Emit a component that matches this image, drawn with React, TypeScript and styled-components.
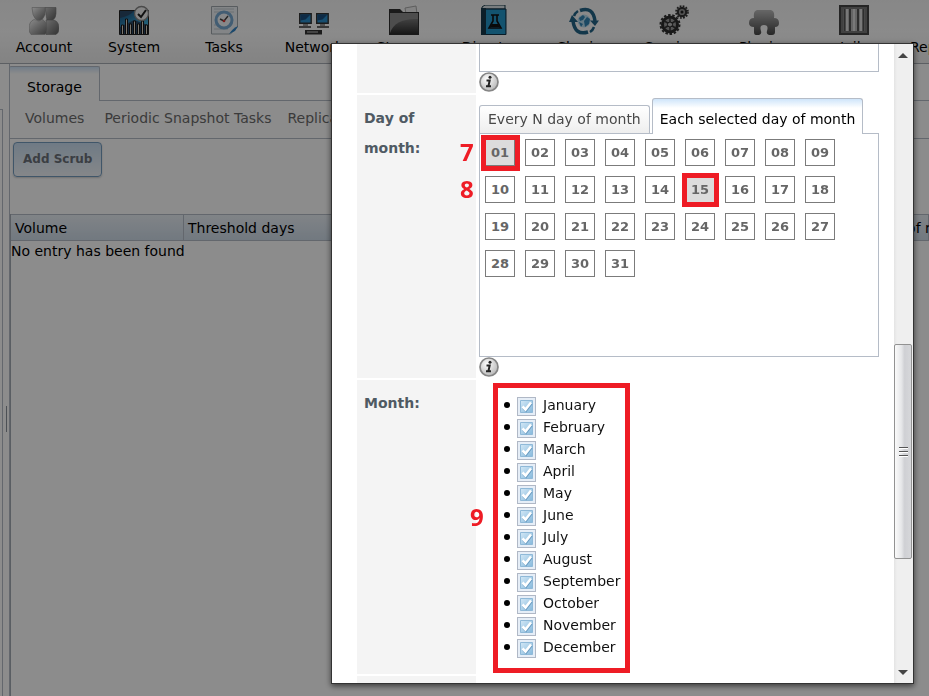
import React from "react";
import styled, { createGlobalStyle, css } from "styled-components";

const GlobalStyle = createGlobalStyle`
  *, *::before, *::after { box-sizing: border-box; }
  html, body, #root { height: 100%; }
  body {
    margin: 0;
    overflow: hidden;
    background: #fff;
    color: #000;
    font: 14px/20px "DejaVu Sans", Verdana, sans-serif;
  }
  button { font: inherit; padding: 0; }
  ul { margin: 0; padding: 0; list-style: none; }
`;

const Page = styled.div`
  height: 100vh;
  overflow: hidden;
  display: flex;
  flex-direction: column;
`;

const Toolbar = styled.nav`
  flex: none;
  height: 64px;
  margin-left: -1px;
  display: flex;
  background: linear-gradient(#f6f6f6, #fdfdfd 50%, #efefef);
  border-bottom: 1px solid #a8adb5;
`;

const ToolItem = styled.button`
  flex: 0 0 90px;
  border: 0;
  background: none;
  padding-top: 5px;
  display: flex;
  flex-direction: column;
  align-items: center;
  gap: 2px;
  svg { display: block; flex: none; }
`;

const Workspace = styled.div`
  flex: 1;
  display: flex;
  min-height: 0;
`;

const SidePane = styled.aside`
  flex: 0 0 3px;
  margin-top: 45px;
  border: 1px solid #b5bcc7;
  border-width: 1px 1px 0 0;
`;

const Splitter = styled.div`
  flex: 0 0 6px;
  display: flex;
  align-items: center;
  justify-content: center;
  padding-top: 78px;
  &::before {
    content: "";
    width: 1px;
    height: 26px;
    background: #8a929c;
  }
`;

const Main = styled.main`
  flex: 1;
  min-width: 0;
  display: flex;
  flex-direction: column;
  border-left: 1px solid #b5bcc7;
  padding-top: 2px;
`;

const MainTabs = styled.div`
  display: flex;
  margin-left: -1px;
  &::after {
    content: "";
    flex: 1;
    border-bottom: 1px solid #b5bcc7;
  }
`;

const MainTab = styled.button`
  height: 35px;
  padding: 5px 17px 0;
  border: 1px solid #b5bcc7;
  border-bottom: 0;
  border-radius: 2px 2px 0 0;
  background: linear-gradient(#cfe3f7, #fff 7px);
`;

const SubTabs = styled.div`
  display: flex;
  gap: 16px;
  height: 38px;
  padding: 0 15px 4px;
  white-space: nowrap;
  border-bottom: 1px solid #b5bcc7;
`;

const SubTab = styled.button`
  border: 0;
  background: none;
  color: #6c6c6c;
  margin-right: 4px;
  & + & { margin-right: 0; }
`;

const Actions = styled.div`
  padding: 3px;
  height: 75px;
`;

const AddButton = styled.button`
  height: 35px;
  padding: 0 9px 2px;
  border: 1px solid #759dc0;
  border-radius: 4px;
  background: linear-gradient(#cbdff2, #f2f6fa);
  box-shadow: 0 1px 2px rgba(0, 0, 0, 0.2);
  color: #6c727a;
  font-weight: bold;
  font-size: 12px;
`;

const Grid = styled.table`
  flex: 1;
  display: flex;
  flex-direction: column;
  width: 100%;
  border-left: 1px solid #a4abb5;
  thead, tbody { display: block; }
  tr { display: flex; }
  th {
    height: 27px;
    padding: 3px 4px;
    text-align: left;
    font-weight: normal;
    white-space: nowrap;
    background: linear-gradient(#eaf0f6, #cfdce9);
    border: 1px solid #b5bcc7;
    border-width: 1px 1px 1px 0;
  }
  td { padding: 0; }
`;

const Head = styled.th<{ $w?: number }>`
  flex: ${(p) => (p.$w ? `0 0 ${p.$w}px` : "1 1 0")};
  min-width: 0;
`;

const Backdrop = styled.div`
  position: fixed;
  inset: 0;
  background: rgba(0, 0, 0, 0.45);
`;

const Dialog = styled.section`
  position: fixed;
  inset: 43px 15px 12px 331px;
  display: flex;
  border: 1px solid #333;
  background: #fff;
  box-shadow: 0 2px 6px rgba(0, 0, 0, 0.6);
`;

const FormArea = styled.div`
  flex: 1;
  min-width: 0;
  overflow: hidden;
  padding: 0 15px 0 25px;
`;

const Row = styled.div`
  display: grid;
  grid-template-columns: 119px minmax(0, 1fr);
  column-gap: 3px;
  margin-bottom: 2px;
`;

const RowLabel = styled.div`
  padding: 8px 30px 0 7px;
  min-height: 20px;
  background: #f4f4f4;
  color: #4f5a63;
  font-weight: bold;
  line-height: 30px;
`;

const Field = styled.div<{ $top?: number }>`
  padding-top: ${(p) => p.$top ?? 0}px;
  padding-bottom: 1px;
`;

const PaneEnd = styled.div`
  height: 28px;
  border: 1px solid #b5bcc7;
  border-top: 0;
`;

const InfoButton = styled.button`
  display: block;
  width: 20px;
  height: 20px;
  border: 0;
  background: none;
  svg { display: block; }
`;

const Tabs = styled.div`
  display: flex;
  align-items: flex-end;
  gap: 2px;
  margin-bottom: -1px;
`;

const Tab = styled.button<{ $active?: boolean }>`
  height: 28px;
  margin-bottom: 1px;
  padding: 0 8px 2px;
  white-space: nowrap;
  border: 1px solid #b5bcc7;
  border-bottom: 0;
  border-radius: 3px 3px 0 0;
  color: #494949;
  background: linear-gradient(#fff, #eee);
  ${(p) =>
    p.$active &&
    css`
      position: relative;
      height: 36px;
      margin-bottom: 0;
      padding: 4px 7px 0;
      color: #000;
      background: linear-gradient(#cfe5fa, #fff 9px);
    `}
`;

const Pane = styled.div`
  min-height: 224px;
  padding: 5px;
  border: 1px solid #b5bcc7;
`;

const Days = styled.ul`
  display: grid;
  grid-template-columns: repeat(9, 30px);
  gap: 10px;
`;

const DayItem = styled.li`
  position: relative;
  height: 27px;
`;

const Day = styled.button`
  width: 100%;
  height: 100%;
  border: 1px solid #7b7b7b;
  background: #fff;
  color: #666;
  font-weight: bold;
  font-size: 13px;
  &[aria-pressed="true"] { background: #dcdcdc; }
`;

const Highlight = styled.span<{ $spread: number }>`
  position: absolute;
  inset: ${(p) => `-${p.$spread - 1}px -${p.$spread}px -${p.$spread}px -${p.$spread - 1}px`};
  border: 5px solid #ee1c25;
  pointer-events: none;
`;

const Step = styled.span`
  position: absolute;
  left: -25px;
  top: -1px;
  color: #ee1c25;
  font: bold 24px/28px "Open Sans", "Noto Sans", sans-serif;
`;

const MonthBox = styled.div`
  position: relative;
  width: 137px;
  margin-left: 14px;
  padding: 6px 0 10px 6px;
  border: 5px solid #ee1c25;
  ${Step} { left: -28px; top: 115px; }
`;

const Month = styled.label`
  display: flex;
  align-items: center;
  height: 22px;
  color: #111;
  &::before {
    content: "";
    width: 6px;
    height: 6px;
    margin-right: 7px;
    border-radius: 50%;
    background: #000;
  }
`;

const Check = styled.span`
  position: relative;
  width: 19px;
  height: 19px;
  margin: 2px 7px 0 0;
  input {
    appearance: none;
    display: block;
    width: 19px;
    height: 19px;
    margin: 0;
    border: 1px solid #b0b8c6;
    background: #e6eef7;
  }
  svg {
    position: absolute;
    inset: 0;
    pointer-events: none;
    visibility: hidden;
  }
  input:checked + svg { visibility: visible; }
`;

const ScrollBar = styled.div`
  flex: 0 0 19px;
  display: flex;
  flex-direction: column;
  padding-right: 1px;
  background: linear-gradient(90deg, #e4e4e4, #efefef 3px);
`;

const Arrow = styled.button`
  flex: 0 0 22px;
  display: flex;
  align-items: center;
  justify-content: center;
  border: 0;
  background: none;
`;

const Track = styled.div<{ $share: number }>`
  flex: ${(p) => p.$share} 0 0;
`;

const Thumb = styled.div`
  flex: 214 0 0;
  display: flex;
  flex-direction: column;
  align-items: center;
  justify-content: center;
  gap: 3px;
  border: 1px solid #929292;
  border-radius: 2px;
  background: linear-gradient(90deg, #fafafa, #e6e7e9 40%, #cfd0d4 60%, #d6d7da);
`;

const Grip = styled.span`
  width: 9px;
  height: 1px;
  background: #555;
  box-shadow: 0 1px #fff;
`;

function Gradients() {
  return (
    <svg width="0" height="0" display="block" aria-hidden="true">
      <defs>
        <linearGradient id="silver" x1="0" y1="0" x2="1" y2="1">
          <stop offset="0" stopColor="#fff" />
          <stop offset="1" stopColor="#686868" />
        </linearGradient>
        <linearGradient id="silverDark" x1="0" y1="0" x2="1" y2="1">
          <stop offset="0" stopColor="#c4c4c4" />
          <stop offset="1" stopColor="#5c5c5c" />
        </linearGradient>
        <linearGradient id="dark" x1="0" y1="0" x2="0" y2="1">
          <stop offset="0" stopColor="#777" />
          <stop offset="1" stopColor="#2c2c2c" />
        </linearGradient>
        <linearGradient id="plug" x1="0" y1="0" x2="0" y2="1">
          <stop offset="0" stopColor="#bbb" />
          <stop offset="1" stopColor="#484848" />
        </linearGradient>
        <linearGradient id="blue" x1="0" y1="0" x2="1" y2="1">
          <stop offset="0" stopColor="#174a78" />
          <stop offset="1" stopColor="#43bde9" />
        </linearGradient>
        <linearGradient id="check" x1="0" y1="0" x2="1" y2="1">
          <stop offset="0" stopColor="#d3e8f6" />
          <stop offset="1" stopColor="#86b9dc" />
        </linearGradient>
        <radialGradient id="info" cx="0.4" cy="0.35" r="0.7">
          <stop offset="0" stopColor="#fff" />
          <stop offset="1" stopColor="#b4b4b4" />
        </radialGradient>
      </defs>
    </svg>
  );
}

const Icon = ({ children }: { children: React.ReactNode }) => (
  <svg width="30" height="30" viewBox="0 0 30 30" aria-hidden="true">
    {children}
  </svg>
);

const AccountIcon = () => (
  <Icon>
    <g strokeWidth="0.6">
      <path d="M16 2.500h11v6q0 5-4 7h-5z" fill="url(#silverDark)" stroke="#777" />
      <path d="M17 15h8q5 2 5 8 0 5-3 6.500H17z" fill="url(#silverDark)" stroke="#777" />
      <path d="M3 2.500h13v7q-2 6-6 6t-6-6z" fill="url(#silver)" stroke="#999" />
      <path d="M5 14.500q5 3 9 0 4 3 4 9 0 5-2 6H2q-2-2-2-6 0-7 5-9z" fill="url(#silver)" stroke="#999" />
    </g>
  </Icon>
);

const SystemIcon = () => (
  <Icon>
    <path d="M.5 5.500h29v24H.5z" fill="#2a4a68" stroke="#222" />
    <path d="M1 13q10-2 14-7h14v14L15 15 1 22z" fill="url(#blue)" />
    <path d="M2.500 29V20h2v9m2 0V14h2v15m2 0V19h2v10m2 0V16h2v13m2 0V19h2v10m2 0V16h2v13m2 0V20h2v9" fill="#ddd8cd" stroke="#161616" />
    <circle cx="22.500" cy="8.500" r="7" fill="#f2f2f2" stroke="#888" strokeWidth="1.400" />
    <path d="M19 9l3 3 5-7" fill="none" stroke="#222" strokeWidth="2" />
  </Icon>
);

const TasksIcon = () => (
  <Icon>
    <path d="M2.500 1.500h26V22l-7 7h-19z" fill="#eef3f6" stroke="#a0a8ae" />
    <path d="M5 4h20M5 7h20M5 20h18M5 24h14" stroke="#c4ccd2" />
    <circle cx="15" cy="15" r="8" fill="#f4f8fb" stroke="#78a9d2" strokeWidth="3" />
    <path d="M15 16l4-5M15 16l-4-2" stroke="#444" strokeWidth="1.400" />
    <circle cx="15" cy="16" r="1.300" fill="#d33" />
    <path d="M20 29q4-6 9-8l-3 5z" fill="#3084c6" />
  </Icon>
);

const NetworkIcon = () => (
  <Icon>
    <path d="M.7 8.700h11.500v9.500H.7zM17.700 8.700h11.500v9.500H17.700z" fill="#2b8fcc" stroke="#333" strokeWidth="1.400" />
    <path d="M1.500 9.500h10l-5 5-5 1zM18.500 9.500h10l-5 5-5 1z" fill="#1b4f80" />
    <path d="M4 19h5v2H4zM21 19h5v2h-5z" fill="#999" />
    <path d="M0 21h12v2H0zM18 21h12v2H18z" fill="#666" />
    <path d="M6 25h17v4.500H6z" fill="#333" />
    <path d="M8 27h11" stroke="#ccc" />
  </Icon>
);

const StorageIcon = () => (
  <Icon>
    <path d="M16 3l11-2 1 8H17z" fill="#eee" stroke="#aaa" />
    <path d="M0 4h11l3 3h16v23H0z" fill="#303030" />
    <path d="M1 8h28v21H1z" fill="#8c8c8c" />
    <path d="M1 28Q6 13 29 14v15H1z" fill="url(#dark)" />
  </Icon>
);

const DirectoryIcon = () => (
  <Icon>
    <path d="M3 2l3-2h20v4H3z" fill="#dce4e8" stroke="#173846" />
    <path d="M3 4h24v25.500H3z" fill="#1d7fae" stroke="#123348" />
    <path d="M7 5h19v24H7z" fill="#2497cb" />
    <path d="M2 3h5v27H2z" fill="#17394c" />
    <path d="M12 10h8M14 10v6l-4 7h12l-4-7v-6" fill="none" stroke="#111" strokeWidth="1.600" />
    <path d="M13 19h6l2 3H11z" fill="#111" />
  </Icon>
);

const SharingIcon = () => (
  <Icon>
    <circle cx="15" cy="16" r="6.500" fill="#b9def0" />
    <path d="M10 13l4-3 2 2-2 3-3 1zM15 16l3-4 3 2-1 5-4 3zM10 17l4 2-2 3z" fill="#3485b5" />
    <path d="M11 5.500Q24 1 26 16" fill="none" stroke="#246487" strokeWidth="3.500" />
    <path d="M21 15.500h9L26 21z" fill="#246487" />
    <path d="M19 27Q6 31 4 16" fill="none" stroke="#246487" strokeWidth="3.500" />
    <path d="M0 17h9L3 10z" fill="#246487" />
    <path d="M5 11q1-3 4-5M25 22q-1 3-4 5" fill="none" stroke="#246487" strokeWidth="2.500" />
  </Icon>
);

const ServicesIcon = () => (
  <Icon>
    <circle cx="11" cy="19.500" r="9.500" fill="none" stroke="#333" strokeWidth="2" strokeDasharray="2.500 1.750" />
    <circle cx="11" cy="19.500" r="7.500" fill="#999" stroke="#2c2c2c" strokeWidth="3" />
    <path d="M11 13v13M5.500 16l11 7M16.500 16l-11 7" stroke="#333" strokeWidth="1.500" />
    <circle cx="11" cy="19.500" r="2.500" fill="#bbb" stroke="#222" />
    <circle cx="23" cy="7" r="6" fill="none" stroke="#333" strokeWidth="1.600" strokeDasharray="1.800 1.340" />
    <circle cx="23" cy="7" r="4.200" fill="#999" stroke="#333" strokeWidth="2.200" />
    <circle cx="23" cy="7" r="1.500" fill="#222" />
  </Icon>
);

const PluginsIcon = () => (
  <Icon>
    <path d="M8 5h14q4 1 3 8 5 0 5 5 0 4-4 4v5q0 3-3 3h-3q-3-1-2-4 2-6-3-6t-3 6q1 3-2 4H7q-2 0-2-3v-5q-5 0-5-4 0-5 5-5-1-7 3-8z" fill="url(#plug)" />
  </Icon>
);

const JailsIcon = () => (
  <Icon>
    <path d="M1 1h28v28H1z" fill="#b8b8b8" stroke="#444" strokeWidth="2" />
    <path d="M3 3h24v24H3z" fill="none" stroke="#777" strokeWidth="2" />
    <path d="M5.500 4v22M11 4v22M19 4v22M24.500 4v22" stroke="#555" strokeWidth="2" />
    <path d="M8 4v22M15 4v22M22 4v22" stroke="#dcdcdc" strokeWidth="2" />
  </Icon>
);

const tools: [string, React.ComponentType][] = [
  ["Account", AccountIcon],
  ["System", SystemIcon],
  ["Tasks", TasksIcon],
  ["Network", NetworkIcon],
  ["Storage", StorageIcon],
  ["Directory", DirectoryIcon],
  ["Sharing", SharingIcon],
  ["Services", ServicesIcon],
  ["Plugins", PluginsIcon],
  ["Jails", JailsIcon],
  ["Reporting", SystemIcon],
];

const months = [
  "January", "February", "March", "April", "May", "June",
  "July", "August", "September", "October", "November", "December",
];

const days = Array.from({ length: 31 }, (_, i) => String(i + 1).padStart(2, "0"));
const highlights: Record<string, number> = { "01": 5, "15": 4 };
const steps: Record<string, string> = { "01": "7", "10": "8" };

const Info = () => (
  <InfoButton aria-label="Help">
    <svg width="20" height="20" viewBox="0 0 20 20">
      <circle cx="10" cy="10" r="9" fill="url(#info)" stroke="#858585" strokeWidth="1.700" />
      <circle cx="11" cy="5.200" r="1.500" fill="#222" />
      <path d="M7.500 8.500h3.200L9.400 14.300h2.600M7 14.300h2.400" fill="none" stroke="#222" strokeWidth="2" />
    </svg>
  </InfoButton>
);

export default function App() {
  const [selected, setSelected] = React.useState(["01", "15"]);
  const toggle = (d: string) =>
    setSelected((s) => (s.includes(d) ? s.filter((x) => x !== d) : [...s, d]));

  return (
    <>
      <GlobalStyle />
      <Page>
        <Toolbar>
          {tools.map(([name, Glyph]) => (
            <ToolItem key={name}>
              <Glyph />
              {name}
            </ToolItem>
          ))}
        </Toolbar>
        <Workspace>
          <SidePane />
          <Splitter />
          <Main>
            <MainTabs>
              <MainTab>Storage</MainTab>
            </MainTabs>
            <SubTabs>
              <SubTab>Volumes</SubTab>
              <SubTab>Periodic Snapshot Tasks</SubTab>
              <SubTab>Replication Tasks</SubTab>
            </SubTabs>
            <Actions>
              <AddButton>Add Scrub</AddButton>
            </Actions>
            <Grid>
              <thead>
                <tr>
                  <Head $w={173}>Volume</Head>
                  <Head $w={174}>Threshold days</Head>
                  <Head>Description</Head>
                  <Head $w={58}>Day of month</Head>
                </tr>
              </thead>
              <tbody>
                <tr>
                  <td colSpan={4}>No entry has been found</td>
                </tr>
              </tbody>
            </Grid>
          </Main>
        </Workspace>
      </Page>
      <Backdrop />
      <Dialog role="dialog" aria-label="Add Scrub">
        <FormArea>
          <Gradients />
          <Row>
            <RowLabel />
            <Field>
              <PaneEnd />
              <Info />
            </Field>
          </Row>
          <Row>
            <RowLabel>Day of month:</RowLabel>
            <Field $top={3}>
              <Tabs role="tablist">
                <Tab role="tab">Every N day of month</Tab>
                <Tab role="tab" aria-selected $active>
                  Each selected day of month
                </Tab>
              </Tabs>
              <Pane>
                <Days>
                  {days.map((d) => (
                    <DayItem key={d}>
                      <Day aria-pressed={selected.includes(d)} onClick={() => toggle(d)}>
                        {d}
                      </Day>
                      {highlights[d] && <Highlight $spread={highlights[d]} />}
                      {steps[d] && <Step>{steps[d]}</Step>}
                    </DayItem>
                  ))}
                </Days>
              </Pane>
              <Info />
            </Field>
          </Row>
          <Row>
            <RowLabel>Month:</RowLabel>
            <Field $top={3}>
              <MonthBox>
                <Step>9</Step>
                <ul>
                  {months.map((m) => (
                    <li key={m}>
                      <Month>
                        <Check>
                          <input type="checkbox" defaultChecked />
                          <svg width="19" height="19" viewBox="0 0 19 19" aria-hidden="true">
                            <path d="M3.500 3.500h12v12h-12z" fill="url(#check)" stroke="#8fb9d8" />
                            <path d="M6 10.500l3 3 5.500-7" fill="none" stroke="#6a9cc2" strokeWidth="2.500" />
                            <path d="M5.500 9.500l3 3 5.500-7" fill="none" stroke="#fff" strokeWidth="2.500" />
                          </svg>
                        </Check>
                        {m}
                      </Month>
                    </li>
                  ))}
                </ul>
              </MonthBox>
            </Field>
          </Row>
          <Row>
            <RowLabel />
          </Row>
        </FormArea>
        <ScrollBar>
          <Arrow aria-label="Scroll up">
            <svg width="10" height="5" viewBox="0 0 10 5">
              <path d="M0 5L5 0l5 5z" fill="#444" />
            </svg>
          </Arrow>
          <Track $share={279} />
          <Thumb>
            <Grip />
            <Grip />
            <Grip />
          </Thumb>
          <Track $share={102} />
          <Arrow aria-label="Scroll down">
            <svg width="10" height="5" viewBox="0 0 10 5">
              <path d="M0 0l5 5 5-5z" fill="#444" />
            </svg>
          </Arrow>
        </ScrollBar>
      </Dialog>
    </>
  );
}
